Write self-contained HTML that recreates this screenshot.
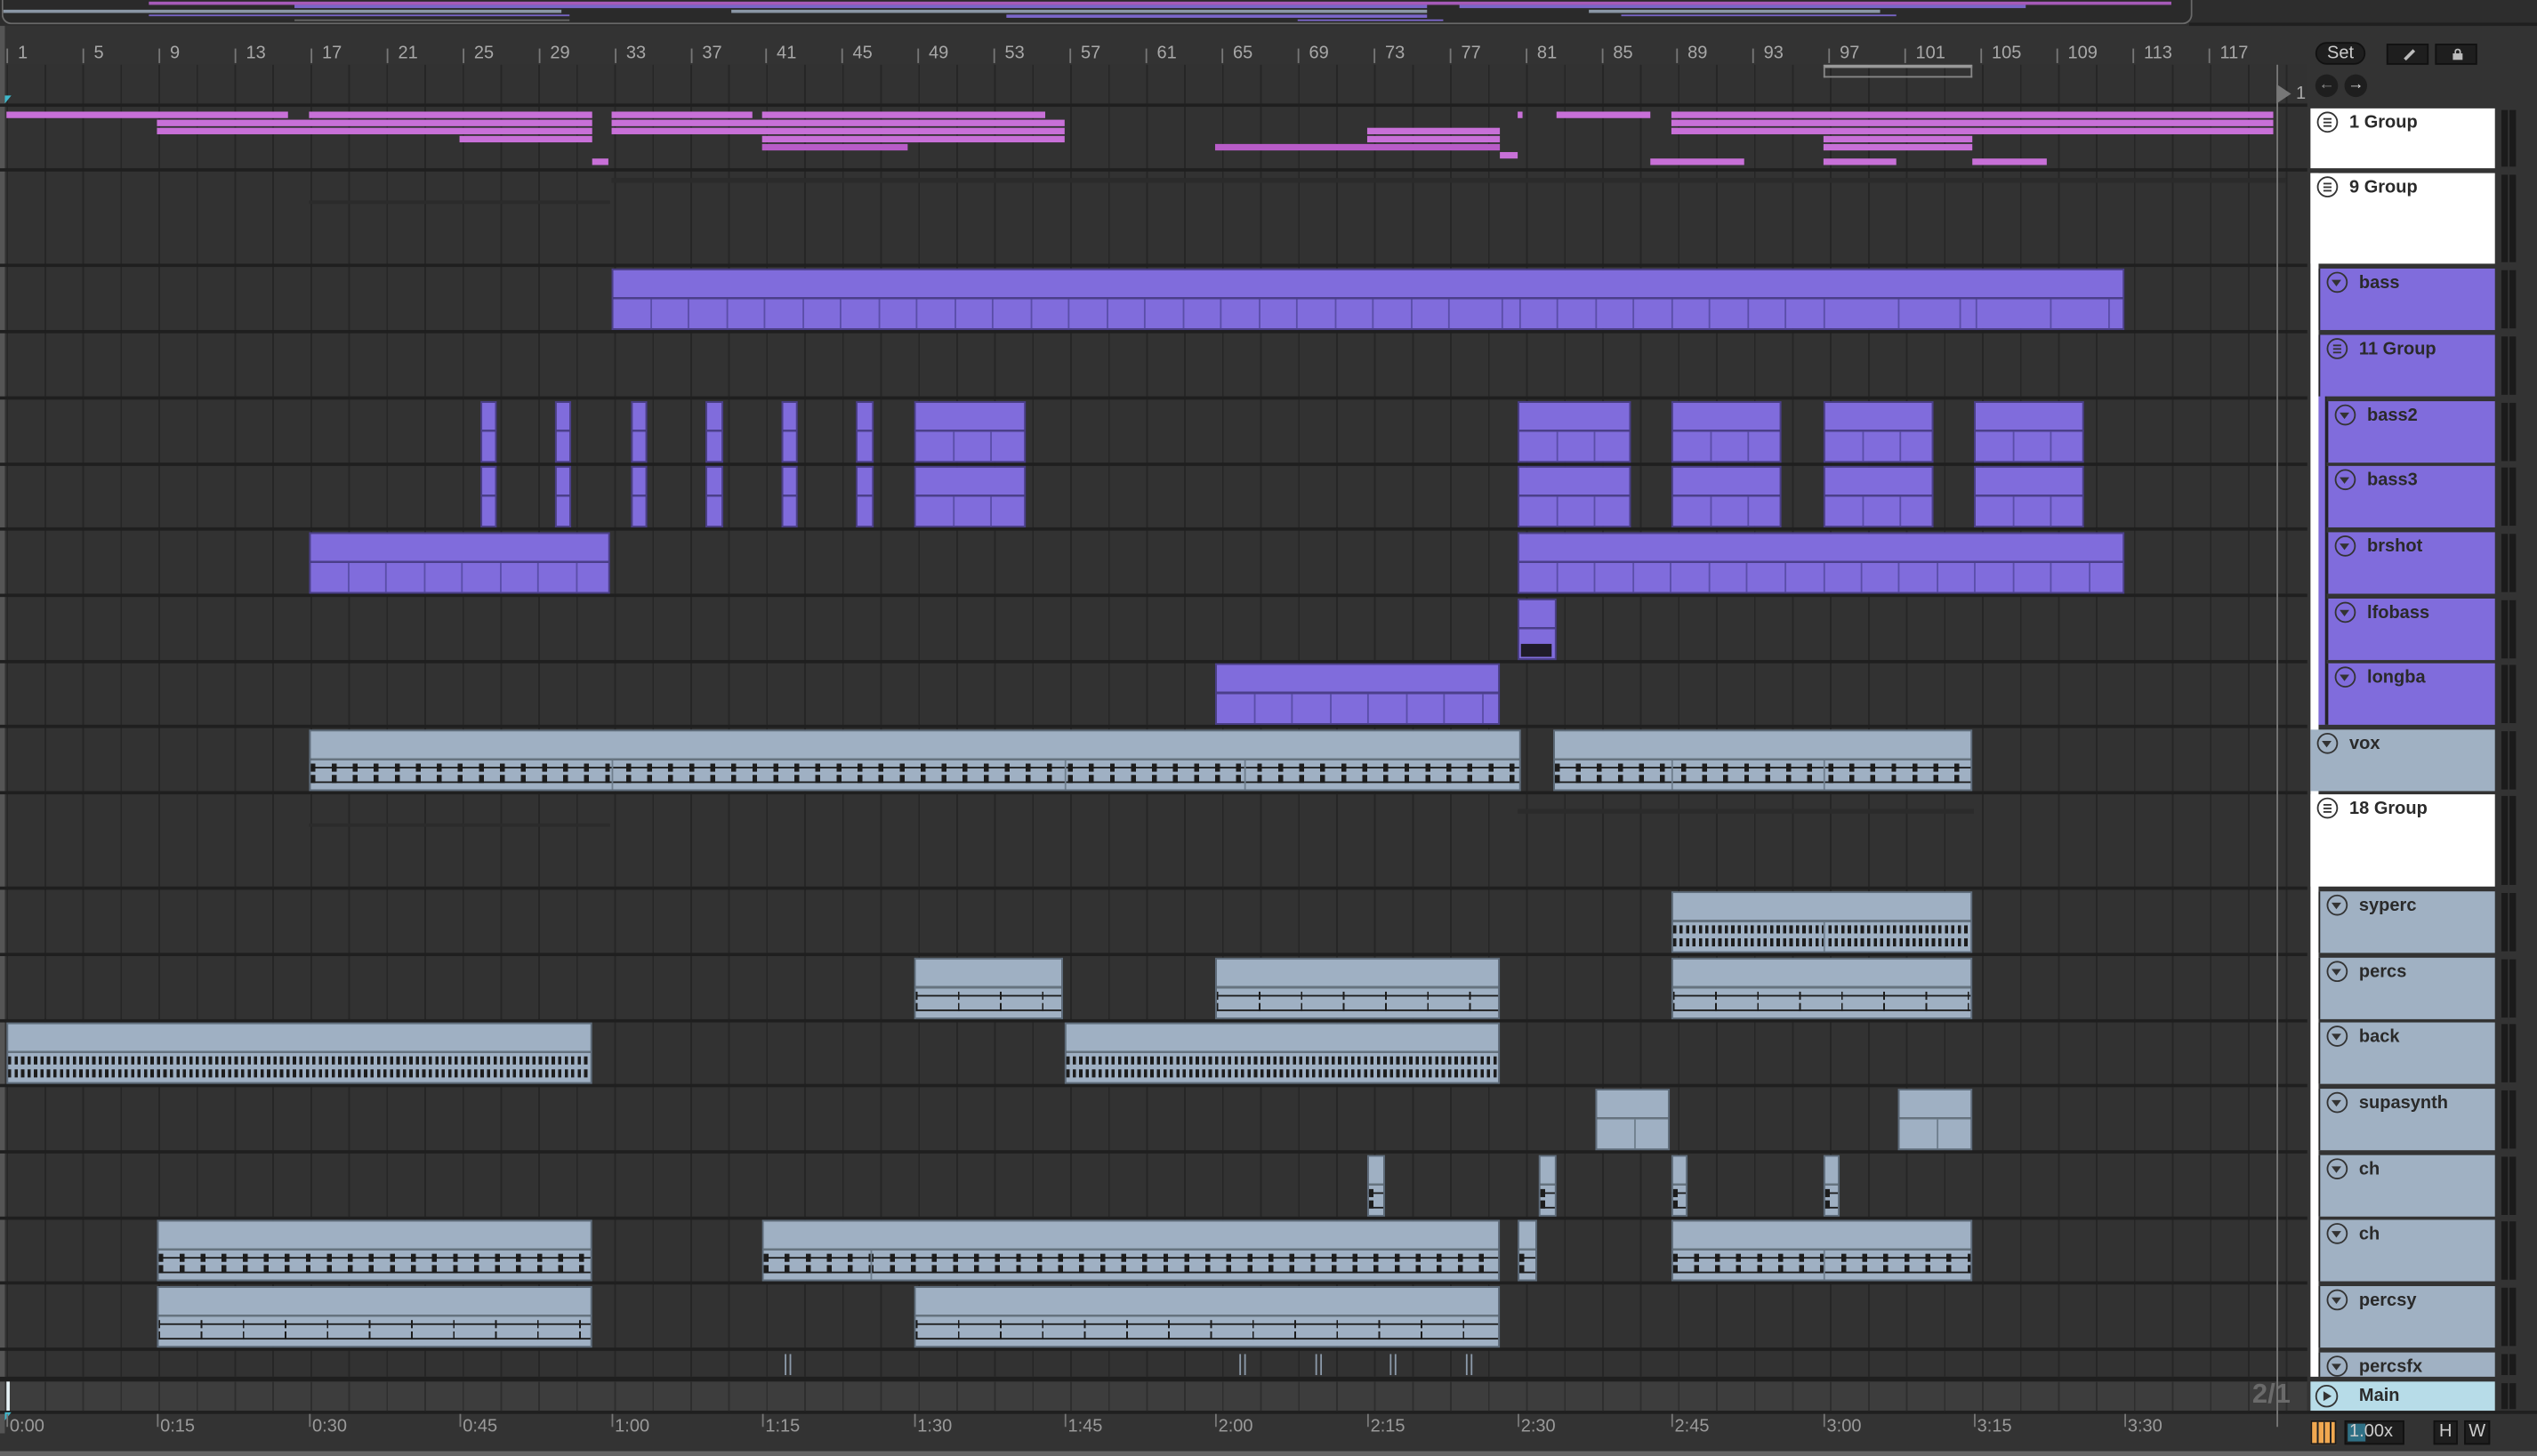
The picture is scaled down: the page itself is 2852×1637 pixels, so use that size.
<!DOCTYPE html>
<html><head><meta charset="utf-8">
<style>
html,body{margin:0;padding:0;background:#262626;width:2852px;height:1636px;overflow:hidden}
#r{position:absolute;left:0;top:0;width:1568px;height:900px;transform:scale(1.81888);transform-origin:0 0;background:#333;font-family:"Liberation Sans",sans-serif;overflow:hidden}
.a{position:absolute}
.grid{position:absolute;left:4px;width:1422px;background-color:#323232;background-image:repeating-linear-gradient(90deg,#262626 0 1px,transparent 1px 23.48px)}
.sep{position:absolute;left:0;width:1568px;height:2px;background:#1f1f1f}
.pk{position:absolute;height:4px;background:#c870d8}
.p{position:absolute;box-sizing:border-box;border:1px solid #4b3f8a;background:linear-gradient(#806cdc 0 46%,#4b3f8a 46% 50%,#806cdc 50%)}
.p i{position:absolute;top:50%;bottom:0;width:1px;background:#5a4ea8}
.s{position:absolute;box-sizing:border-box;border:1px solid #5f6d7c;background:
 repeating-linear-gradient(90deg,#1c1c1c 0 3px,transparent 3px 13px) 0 64%/100% 5px no-repeat,
 repeating-linear-gradient(90deg,#1c1c1c 0 3px,transparent 3px 13px) 0 88%/100% 5px no-repeat,
 linear-gradient(#1c1c1c,#1c1c1c) 0 64%/100% 1px no-repeat,
 linear-gradient(#1c1c1c,#1c1c1c) 0 88%/100% 1px no-repeat,
 linear-gradient(#9fb0c3 0 46%,#66737f 46% 50%,#9fb0c3 50%)}
.s.d{background:
 repeating-linear-gradient(90deg,#1c1c1c 0 2px,transparent 2px 4px) 0 64%/100% 5px no-repeat,
 repeating-linear-gradient(90deg,#1c1c1c 0 2px,transparent 2px 4px) 0 90%/100% 5px no-repeat,
 linear-gradient(#9fb0c3 0 46%,#66737f 46% 50%,#9fb0c3 50%)}
.s.l{background:
 repeating-linear-gradient(90deg,#1c1c1c 0 1px,transparent 1px 26px) 0 64%/100% 5px no-repeat,
 repeating-linear-gradient(90deg,#1c1c1c 0 1px,transparent 1px 26px) 0 88%/100% 5px no-repeat,
 linear-gradient(#1c1c1c,#1c1c1c) 0 64%/100% 1px no-repeat,
 linear-gradient(#1c1c1c,#1c1c1c) 0 88%/100% 1px no-repeat,
 linear-gradient(#9fb0c3 0 46%,#66737f 46% 50%,#9fb0c3 50%)}
.s i{position:absolute;top:50%;bottom:0;width:1px;background:#6f7e8d}
.rn{position:absolute;top:27px;font-size:11px;color:#a8a8a8;letter-spacing:0}
.rt{position:absolute;top:30px;width:1px;height:9px;background:#777}
.tl{position:absolute;top:876px;font-size:11px;color:#9a9a9a}
.tt{position:absolute;top:874px;width:1px;height:8px;background:#777}
.h{position:absolute;box-sizing:border-box;font-size:11px;font-weight:bold;color:#2a2a2a;padding:3px 0 0 24px;overflow:hidden;white-space:nowrap}
.h b{position:absolute;left:4px;top:2px;width:13px;height:13px;border:1.3px solid #333;border-radius:50%;box-sizing:border-box}
.h b.t:after{content:"";position:absolute;left:2.4px;top:3.8px;border-left:3.2px solid transparent;border-right:3.2px solid transparent;border-top:4.4px solid #333}
.h b.g:after{content:"";position:absolute;left:2.8px;top:3px;width:5px;height:1.2px;background:#333;box-shadow:0 2.2px 0 #333,0 4.4px 0 #333}
.hw{background:#fff}.hp{background:#806cdc}.hs{background:#a0b1c3}
.m{position:absolute;left:1546px;width:4px;background:#1b1b1b;box-shadow:5px 0 0 #1b1b1b}
</style></head><body>
<div id="r">
<!-- overview -->
<div class="a" style="left:0;top:0;width:1568px;height:16px;background:#2d2d2d"></div>
<div class="a" style="left:1px;top:0;width:1352px;height:14px;border:1px solid #6a6a6a;border-top:none;border-radius:0 0 6px 6px;background:#2a2a2a;overflow:hidden">
 <div class="a" style="left:90px;top:1px;width:1250px;height:2px;background:#a65ab8"></div>
 <div class="a" style="left:180px;top:3px;width:700px;height:2px;background:#7a66c8"></div>
 <div class="a" style="left:900px;top:3px;width:350px;height:2px;background:#7a66c8"></div>
 <div class="a" style="left:0;top:6px;width:345px;height:2px;background:#8a96a4"></div>
 <div class="a" style="left:450px;top:6px;width:430px;height:2px;background:#8a96a4"></div>
 <div class="a" style="left:980px;top:6px;width:180px;height:2px;background:#8a96a4"></div>
 <div class="a" style="left:90px;top:9px;width:260px;height:1px;background:#7a66c8"></div>
 <div class="a" style="left:620px;top:9px;width:260px;height:2px;background:#7a66c8"></div>
 <div class="a" style="left:1000px;top:9px;width:170px;height:1px;background:#7a66c8"></div>
 <div class="a" style="left:180px;top:12px;width:170px;height:1px;background:#666"></div>
 <div class="a" style="left:800px;top:12px;width:90px;height:1px;background:#7a66c8"></div>
</div>
<div class="a" style="left:1353px;top:14px;width:215px;height:2px;background:#1f1f1f"></div>
<!-- ruler -->
<div class="rt" style="left:4px"></div><div class="rn" style="left:11px">1</div>
<div class="rt" style="left:51px"></div><div class="rn" style="left:58px">5</div>
<div class="rt" style="left:98px"></div><div class="rn" style="left:105px">9</div>
<div class="rt" style="left:145px"></div><div class="rn" style="left:152px">13</div>
<div class="rt" style="left:192px"></div><div class="rn" style="left:199px">17</div>
<div class="rt" style="left:239px"></div><div class="rn" style="left:246px">21</div>
<div class="rt" style="left:286px"></div><div class="rn" style="left:293px">25</div>
<div class="rt" style="left:333px"></div><div class="rn" style="left:340px">29</div>
<div class="rt" style="left:380px"></div><div class="rn" style="left:387px">33</div>
<div class="rt" style="left:427px"></div><div class="rn" style="left:434px">37</div>
<div class="rt" style="left:473px"></div><div class="rn" style="left:480px">41</div>
<div class="rt" style="left:520px"></div><div class="rn" style="left:527px">45</div>
<div class="rt" style="left:567px"></div><div class="rn" style="left:574px">49</div>
<div class="rt" style="left:614px"></div><div class="rn" style="left:621px">53</div>
<div class="rt" style="left:661px"></div><div class="rn" style="left:668px">57</div>
<div class="rt" style="left:708px"></div><div class="rn" style="left:715px">61</div>
<div class="rt" style="left:755px"></div><div class="rn" style="left:762px">65</div>
<div class="rt" style="left:802px"></div><div class="rn" style="left:809px">69</div>
<div class="rt" style="left:849px"></div><div class="rn" style="left:856px">73</div>
<div class="rt" style="left:896px"></div><div class="rn" style="left:903px">77</div>
<div class="rt" style="left:943px"></div><div class="rn" style="left:950px">81</div>
<div class="rt" style="left:990px"></div><div class="rn" style="left:997px">85</div>
<div class="rt" style="left:1036px"></div><div class="rn" style="left:1043px">89</div>
<div class="rt" style="left:1083px"></div><div class="rn" style="left:1090px">93</div>
<div class="rt" style="left:1130px"></div><div class="rn" style="left:1137px">97</div>
<div class="rt" style="left:1177px"></div><div class="rn" style="left:1184px">101</div>
<div class="rt" style="left:1224px"></div><div class="rn" style="left:1231px">105</div>
<div class="rt" style="left:1271px"></div><div class="rn" style="left:1278px">109</div>
<div class="rt" style="left:1318px"></div><div class="rn" style="left:1325px">113</div>
<div class="rt" style="left:1365px"></div><div class="rn" style="left:1372px">117</div>
<!-- grid areas -->
<div class="grid" style="top:40px;height:811px"></div>
<div class="a" style="left:0;top:16px;width:3px;height:870px;background:#555"></div>
<!-- loop brace -->
<div class="a" style="left:1127px;top:40px;width:92px;height:8px;border:1px solid #888;border-top:2px solid #999;box-sizing:border-box"></div>
<div class="a" style="left:3px;top:59px;width:0;height:0;border-left:4px solid #3fb8cc;border-bottom:5px solid transparent"></div>
<!-- separators -->
<div class="sep" style="top:64px"></div><div class="sep" style="top:104px"></div><div class="sep" style="top:163px"></div>
<div class="sep" style="top:204px"></div><div class="sep" style="top:245px"></div><div class="sep" style="top:286px"></div>
<div class="sep" style="top:326px"></div><div class="sep" style="top:367px"></div><div class="sep" style="top:408px"></div>
<div class="sep" style="top:448px"></div><div class="sep" style="top:489px"></div><div class="sep" style="top:548px"></div>
<div class="sep" style="top:589px"></div><div class="sep" style="top:630px"></div><div class="sep" style="top:670px"></div>
<div class="sep" style="top:711px"></div><div class="sep" style="top:752px"></div><div class="sep" style="top:792px"></div>
<div class="sep" style="top:833px"></div><div class="sep" style="top:851px;height:3px"></div><div class="sep" style="top:872px;height:2px"></div>
<!-- main row -->
<div class="a" style="left:4px;top:854px;width:1422px;height:18px;background-color:#3d3d3d;background-image:repeating-linear-gradient(90deg,#2e2e2e 0 1px,transparent 1px 23.48px)"></div>
<div class="a" style="left:4px;top:854px;width:2px;height:18px;background:#e8f4f8"></div>
<div class="a" style="left:1392px;top:852px;font-size:17px;font-weight:bold;color:#6a6a6a">2/1</div>
<!-- group 1 pink -->
<div class="pk" style="left:4px;top:69px;width:174px"></div><div class="pk" style="left:191px;top:69px;width:175px"></div>
<div class="pk" style="left:378px;top:69px;width:87px"></div><div class="pk" style="left:471px;top:69px;width:175px"></div>
<div class="pk" style="left:938px;top:69px;width:3px"></div><div class="pk" style="left:962px;top:69px;width:58px"></div>
<div class="pk" style="left:1033px;top:69px;width:372px"></div>
<div class="pk" style="left:97px;top:74px;width:269px"></div><div class="pk" style="left:378px;top:74px;width:280px"></div><div class="pk" style="left:1033px;top:74px;width:372px"></div>
<div class="pk" style="left:97px;top:79px;width:269px"></div><div class="pk" style="left:378px;top:79px;width:280px"></div><div class="pk" style="left:845px;top:79px;width:82px"></div><div class="pk" style="left:1033px;top:79px;width:372px"></div>
<div class="pk" style="left:284px;top:84px;width:82px"></div><div class="pk" style="left:471px;top:84px;width:187px"></div><div class="pk" style="left:845px;top:84px;width:82px"></div><div class="pk" style="left:1127px;top:84px;width:92px"></div>
<div class="pk" style="left:471px;top:89px;width:90px;background:#b85cc8"></div><div class="pk" style="left:751px;top:89px;width:176px;background:#b85cc8"></div><div class="pk" style="left:1127px;top:89px;width:92px"></div>
<div class="pk" style="left:366px;top:98px;width:10px"></div><div class="pk" style="left:927px;top:94px;width:11px"></div><div class="pk" style="left:1020px;top:98px;width:58px"></div><div class="pk" style="left:1127px;top:98px;width:45px"></div><div class="pk" style="left:1219px;top:98px;width:46px"></div>
<!-- faint group lines -->
<div class="a" style="left:191px;top:124px;width:186px;height:2px;background:#2b2b2b"></div>
<div class="a" style="left:378px;top:110px;width:1035px;height:3px;background:#2b2b2b"></div>
<div class="a" style="left:191px;top:509px;width:186px;height:2px;background:#2b2b2b"></div>
<div class="a" style="left:938px;top:500px;width:282px;height:3px;background:#2b2b2b"></div>
<!-- bass -->
<div class="p" style="left:378px;top:166px;width:935px;height:38px"><i style="left:549px"></i><i style="left:560px"></i><i style="left:748px"></i><i style="left:794px"></i><i style="left:832px"></i><i style="left:842px"></i><i style="left:888px"></i><i style="left:924px"></i><i style="left:23px"></i><i style="left:46px"></i><i style="left:70px"></i><i style="left:93px"></i><i style="left:117px"></i><i style="left:140px"></i><i style="left:164px"></i><i style="left:187px"></i><i style="left:211px"></i><i style="left:234px"></i><i style="left:258px"></i><i style="left:281px"></i><i style="left:305px"></i><i style="left:328px"></i><i style="left:352px"></i><i style="left:375px"></i><i style="left:399px"></i><i style="left:422px"></i><i style="left:446px"></i><i style="left:469px"></i><i style="left:493px"></i><i style="left:516px"></i><i style="left:583px"></i><i style="left:607px"></i><i style="left:630px"></i><i style="left:654px"></i><i style="left:677px"></i><i style="left:701px"></i><i style="left:724px"></i></div>
<!-- bass2 / bass3 -->
<div class="p" style="left:297px;top:248px;width:10px;height:38px"></div><div class="p" style="left:343px;top:248px;width:10px;height:38px"></div>
<div class="p" style="left:390px;top:248px;width:10px;height:38px"></div><div class="p" style="left:436px;top:248px;width:11px;height:38px"></div>
<div class="p" style="left:483px;top:248px;width:10px;height:38px"></div><div class="p" style="left:529px;top:248px;width:11px;height:38px"></div>
<div class="p" style="left:565px;top:248px;width:69px;height:38px"><i style="left:23px"></i><i style="left:46px"></i></div>
<div class="p" style="left:938px;top:248px;width:70px;height:38px"><i style="left:23px"></i><i style="left:46px"></i></div>
<div class="p" style="left:1033px;top:248px;width:68px;height:38px"><i style="left:23px"></i><i style="left:46px"></i></div>
<div class="p" style="left:1127px;top:248px;width:68px;height:38px"><i style="left:23px"></i><i style="left:46px"></i></div>
<div class="p" style="left:1220px;top:248px;width:68px;height:38px"><i style="left:23px"></i><i style="left:46px"></i></div>
<div class="p" style="left:297px;top:288px;width:10px;height:38px"></div><div class="p" style="left:343px;top:288px;width:10px;height:38px"></div>
<div class="p" style="left:390px;top:288px;width:10px;height:38px"></div><div class="p" style="left:436px;top:288px;width:11px;height:38px"></div>
<div class="p" style="left:483px;top:288px;width:10px;height:38px"></div><div class="p" style="left:529px;top:288px;width:11px;height:38px"></div>
<div class="p" style="left:565px;top:288px;width:69px;height:38px"><i style="left:23px"></i><i style="left:46px"></i></div>
<div class="p" style="left:938px;top:288px;width:70px;height:38px"><i style="left:23px"></i><i style="left:46px"></i></div>
<div class="p" style="left:1033px;top:288px;width:68px;height:38px"><i style="left:23px"></i><i style="left:46px"></i></div>
<div class="p" style="left:1127px;top:288px;width:68px;height:38px"><i style="left:23px"></i><i style="left:46px"></i></div>
<div class="p" style="left:1220px;top:288px;width:68px;height:38px"><i style="left:23px"></i><i style="left:46px"></i></div>
<!-- brshot -->
<div class="p" style="left:191px;top:329px;width:186px;height:38px"><i style="left:23px"></i><i style="left:46px"></i><i style="left:70px"></i><i style="left:93px"></i><i style="left:117px"></i><i style="left:140px"></i><i style="left:164px"></i></div>
<div class="p" style="left:938px;top:329px;width:375px;height:38px"><i style="left:23px"></i><i style="left:46px"></i><i style="left:70px"></i><i style="left:93px"></i><i style="left:117px"></i><i style="left:140px"></i><i style="left:164px"></i><i style="left:188px"></i><i style="left:211px"></i><i style="left:234px"></i><i style="left:258px"></i><i style="left:281px"></i><i style="left:305px"></i><i style="left:328px"></i><i style="left:352px"></i></div>
<!-- lfobass -->
<div class="p" style="left:938px;top:370px;width:24px;height:38px"></div>
<div class="a" style="left:940px;top:398px;width:19px;height:8px;background:#1f1c28"></div>
<!-- longba -->
<div class="p" style="left:751px;top:410px;width:176px;height:38px"><i style="left:23px"></i><i style="left:46px"></i><i style="left:70px"></i><i style="left:93px"></i><i style="left:117px"></i><i style="left:140px"></i><i style="left:164px"></i></div>
<!-- vox -->
<div class="s" style="left:191px;top:451px;width:749px;height:38px"><i style="left:186px"></i><i style="left:466px"></i><i style="left:577px"></i></div>
<div class="s" style="left:960px;top:451px;width:259px;height:38px"><i style="left:72px"></i><i style="left:166px"></i></div>
<!-- syperc -->
<div class="s d" style="left:1033px;top:551px;width:186px;height:38px"><i style="left:93px"></i></div>
<!-- percs -->
<div class="s l" style="left:565px;top:592px;width:92px;height:38px"></div>
<div class="s l" style="left:751px;top:592px;width:176px;height:38px"></div>
<div class="s l" style="left:1033px;top:592px;width:186px;height:38px"></div>
<!-- back -->
<div class="s d" style="left:4px;top:632px;width:362px;height:38px"></div>
<div class="s d" style="left:658px;top:632px;width:269px;height:38px"></div>
<!-- supasynth -->
<div class="s" style="left:986px;top:673px;width:46px;height:38px;background:linear-gradient(#9fb0c3 0 46%,#66737f 46% 50%,#9fb0c3 50%)"><i style="left:23px"></i></div>
<div class="s" style="left:1173px;top:673px;width:46px;height:38px;background:linear-gradient(#9fb0c3 0 46%,#66737f 46% 50%,#9fb0c3 50%)"><i style="left:23px"></i></div>
<!-- ch -->
<div class="s" style="left:845px;top:714px;width:11px;height:38px"></div>
<div class="s" style="left:951px;top:714px;width:11px;height:38px"></div>
<div class="s" style="left:1033px;top:714px;width:10px;height:38px"></div>
<div class="s" style="left:1127px;top:714px;width:10px;height:38px"></div>
<!-- ch 2 -->
<div class="s" style="left:97px;top:754px;width:269px;height:38px"></div>
<div class="s" style="left:471px;top:754px;width:456px;height:38px"><i style="left:66px"></i></div>
<div class="s" style="left:938px;top:754px;width:12px;height:38px"></div>
<div class="s" style="left:1033px;top:754px;width:186px;height:38px"><i style="left:93px"></i></div>
<!-- percsy -->
<div class="s l" style="left:97px;top:795px;width:269px;height:38px"></div>
<div class="s l" style="left:565px;top:795px;width:362px;height:38px"></div>
<!-- percsfx marks -->
<div class="a" style="left:485px;top:837px;width:1px;height:13px;background:#8c9aaa;box-shadow:3px 0 0 #8c9aaa"></div>
<div class="a" style="left:766px;top:837px;width:1px;height:13px;background:#8c9aaa;box-shadow:3px 0 0 #8c9aaa"></div>
<div class="a" style="left:813px;top:837px;width:1px;height:13px;background:#8c9aaa;box-shadow:3px 0 0 #8c9aaa"></div>
<div class="a" style="left:859px;top:837px;width:1px;height:13px;background:#8c9aaa;box-shadow:3px 0 0 #8c9aaa"></div>
<div class="a" style="left:906px;top:837px;width:1px;height:13px;background:#8c9aaa;box-shadow:3px 0 0 #8c9aaa"></div>
<!-- right dark column -->
<div class="a" style="left:1426px;top:40px;width:142px;height:832px;background:#333"></div>
<div class="a" style="left:1407px;top:40px;width:1px;height:842px;background:#777"></div>
<div class="a" style="left:1407px;top:52px;width:0;height:0;border-top:6px solid transparent;border-bottom:6px solid transparent;border-left:9px solid #777"></div>
<div class="a" style="left:1419px;top:52px;font-size:11px;color:#aaa">1</div>
<!-- buttons -->
<div class="a" style="left:1431px;top:26px;width:31px;height:14px;border-radius:7px;background:#1e1e1e;border:1px solid #111;box-sizing:border-box;color:#ccc;font-size:11px;text-align:center;line-height:12px">Set</div>
<div class="a" style="left:1475px;top:27px;width:26px;height:13px;background:#1e1e1e;border:1px solid #111;box-sizing:border-box"><div class="a" style="left:9px;top:5px;width:8px;height:1.5px;background:#bbb;transform:rotate(-45deg)"></div></div>
<div class="a" style="left:1505px;top:27px;width:26px;height:13px;background:#1e1e1e;border:1px solid #111;box-sizing:border-box"><div class="a" style="left:10px;top:5px;width:6px;height:4px;background:#bbb"></div><div class="a" style="left:11px;top:2px;width:2px;height:3px;border:1px solid #bbb;border-bottom:none;border-radius:2px 2px 0 0"></div></div>
<div class="a" style="left:1431px;top:46px;width:14px;height:14px;border-radius:50%;background:#1e1e1e;color:#888;font-size:10px;text-align:center;line-height:14px">&#8592;</div>
<div class="a" style="left:1449px;top:46px;width:14px;height:14px;border-radius:50%;background:#1e1e1e;color:#ddd;font-size:10px;text-align:center;line-height:14px">&#8594;</div>
<!-- headers -->
<div class="a" style="left:1428px;top:107px;width:5px;height:744px;background:#fff"></div>
<div class="a" style="left:1433px;top:207px;width:5px;height:241px;background:#806cdc;border-right:1px solid #222;box-sizing:border-box"></div>
<div class="h hw" style="left:1428px;top:67px;width:114px;height:37px"><b class="g"></b>1 Group</div>
<div class="h hw" style="left:1428px;top:107px;width:114px;height:56px"><b class="g"></b>9 Group</div>
<div class="h hp" style="left:1433px;top:166px;width:109px;height:38px;border-left:1px solid #222"><b class="t"></b>bass</div>
<div class="h hp" style="left:1433px;top:207px;width:109px;height:38px;border-left:1px solid #222"><b class="g"></b>11 Group</div>
<div class="h hp" style="left:1438px;top:248px;width:104px;height:38px;border-left:1px solid #222"><b class="t"></b>bass2</div>
<div class="h hp" style="left:1438px;top:288px;width:104px;height:38px;border-left:1px solid #222"><b class="t"></b>bass3</div>
<div class="h hp" style="left:1438px;top:329px;width:104px;height:38px;border-left:1px solid #222"><b class="t"></b>brshot</div>
<div class="h hp" style="left:1438px;top:370px;width:104px;height:38px;border-left:1px solid #222"><b class="t"></b>lfobass</div>
<div class="h hp" style="left:1438px;top:410px;width:104px;height:38px;border-left:1px solid #222"><b class="t"></b>longba</div>
<div class="h hs" style="left:1428px;top:451px;width:114px;height:38px"><b class="t"></b>vox</div>
<div class="h hw" style="left:1428px;top:491px;width:114px;height:57px"><b class="g"></b>18 Group</div>
<div class="h hs" style="left:1433px;top:551px;width:109px;height:38px;border-left:1px solid #222"><b class="t"></b>syperc</div>
<div class="h hs" style="left:1433px;top:592px;width:109px;height:38px;border-left:1px solid #222"><b class="t"></b>percs</div>
<div class="h hs" style="left:1433px;top:632px;width:109px;height:38px;border-left:1px solid #222"><b class="t"></b>back</div>
<div class="h hs" style="left:1433px;top:673px;width:109px;height:38px;border-left:1px solid #222"><b class="t"></b>supasynth</div>
<div class="h hs" style="left:1433px;top:714px;width:109px;height:38px;border-left:1px solid #222"><b class="t"></b>ch</div>
<div class="h hs" style="left:1433px;top:754px;width:109px;height:38px;border-left:1px solid #222"><b class="t"></b>ch</div>
<div class="h hs" style="left:1433px;top:795px;width:109px;height:38px;border-left:1px solid #222"><b class="t"></b>percsy</div>
<div class="h hs" style="left:1433px;top:836px;width:109px;height:15px;border-left:1px solid #222"><b class="t"></b>percsfx</div>
<div class="h" style="left:1428px;top:854px;width:114px;height:18px;background:#b7dce8;padding-top:3px;padding-left:30px"><b style="left:3px;top:2px;width:14px;height:14px"></b><span class="a" style="left:8px;top:5.5px;width:0;height:0;border-top:3.5px solid transparent;border-bottom:3.5px solid transparent;border-left:5px solid #333"></span>Main</div>
<!-- meters -->
<div class="m" style="top:68px;height:35px"></div><div class="m" style="top:108px;height:54px"></div>
<div class="m" style="top:167px;height:36px"></div><div class="m" style="top:208px;height:36px"></div>
<div class="m" style="top:249px;height:36px"></div><div class="m" style="top:289px;height:36px"></div>
<div class="m" style="top:330px;height:36px"></div><div class="m" style="top:371px;height:36px"></div>
<div class="m" style="top:411px;height:36px"></div><div class="m" style="top:452px;height:36px"></div>
<div class="m" style="top:492px;height:55px"></div><div class="m" style="top:552px;height:36px"></div>
<div class="m" style="top:593px;height:36px"></div><div class="m" style="top:633px;height:36px"></div>
<div class="m" style="top:674px;height:36px"></div><div class="m" style="top:715px;height:36px"></div>
<div class="m" style="top:755px;height:36px"></div><div class="m" style="top:796px;height:36px"></div>
<div class="m" style="top:837px;height:13px"></div><div class="m" style="top:855px;height:16px"></div>
<!-- time ruler -->
<div class="a" style="left:3px;top:873px;width:0;height:0;border-left:4px solid #3fb8cc;border-bottom:5px solid transparent"></div>
<div class="tt" style="left:4px"></div><div class="tl" style="left:6px">0:00</div>
<div class="tt" style="left:97px"></div><div class="tl" style="left:99px">0:15</div>
<div class="tt" style="left:191px"></div><div class="tl" style="left:193px">0:30</div>
<div class="tt" style="left:284px"></div><div class="tl" style="left:286px">0:45</div>
<div class="tt" style="left:378px"></div><div class="tl" style="left:380px">1:00</div>
<div class="tt" style="left:471px"></div><div class="tl" style="left:473px">1:15</div>
<div class="tt" style="left:565px"></div><div class="tl" style="left:567px">1:30</div>
<div class="tt" style="left:658px"></div><div class="tl" style="left:660px">1:45</div>
<div class="tt" style="left:751px"></div><div class="tl" style="left:753px">2:00</div>
<div class="tt" style="left:845px"></div><div class="tl" style="left:847px">2:15</div>
<div class="tt" style="left:938px"></div><div class="tl" style="left:940px">2:30</div>
<div class="tt" style="left:1033px"></div><div class="tl" style="left:1035px">2:45</div>
<div class="tt" style="left:1127px"></div><div class="tl" style="left:1129px">3:00</div>
<div class="tt" style="left:1220px"></div><div class="tl" style="left:1222px">3:15</div>
<div class="tt" style="left:1313px"></div><div class="tl" style="left:1315px">3:30</div>
<!-- bottom controls -->
<div class="a" style="left:1428px;top:878px;width:16px;height:15px;background:#f0a850;border:1px solid #1a1a1a;box-sizing:border-box;background-image:repeating-linear-gradient(90deg,transparent 0 3px,#222 3px 4px)"></div>
<div class="a" style="left:1449px;top:878px;width:37px;height:15px;background:#1e1e1e;border:1px solid #111;box-sizing:border-box;font-size:11px;color:#ccc;line-height:13px;padding-left:2px"><span class="a" style="left:1px;top:1px;width:11px;height:11px;background:#2f7085"></span><span style="position:relative">1.00x</span></div>
<div class="a" style="left:1504px;top:878px;width:15px;height:15px;background:#1e1e1e;border:1px solid #111;box-sizing:border-box;font-size:11px;color:#ccc;text-align:center;line-height:13px">H</div>
<div class="a" style="left:1523px;top:878px;width:16px;height:15px;background:#1e1e1e;border:1px solid #111;box-sizing:border-box;font-size:11px;color:#ccc;text-align:center;line-height:13px">W</div>
<div class="a" style="left:0;top:897px;width:1568px;height:3px;background:#666"></div>
</div>
</body></html>
